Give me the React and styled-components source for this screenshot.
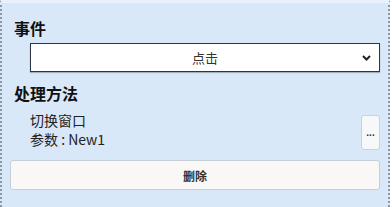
import React from "react";
import styled, { createGlobalStyle } from "styled-components";

const GlobalStyle = createGlobalStyle`
  body {
    margin: 0;
    background: #ffffff;
    font-family: "Noto Sans CJK SC", "Noto Sans", sans-serif;
  }
`;

const Panel = styled("div")`
  width: 390px;
  height: 207px;
  box-sizing: border-box;
  background: #d9e8f8;
  border-left: 2px dotted #8a98a8;
  border-right: 2px dotted #8a98a8;
  border-top: 3px solid #e9f2fc;
  padding: 15px 8px 0 8px;
  display: flex;
  flex-direction: column;
`;

const Heading = styled("div")`
  font-size: 16px;
  font-weight: 700;
  line-height: 20px;
  color: #111;
  margin-left: 4px;
  margin-top: ${({ top }) => top || 0}px;
`;

const Select = styled("div")`
  margin: 5px 0 0 20px;
  height: 29px;
  box-sizing: border-box;
  border: 1px solid #2e3440;
  background: #fff;
  box-shadow: 0 1px 1px rgba(0, 0, 0, 0.25);
  display: flex;
  align-items: center;
  position: relative;
  font-size: 13px;
  color: #333;

  span {
    flex: 1;
    text-align: center;
  }

  svg {
    position: absolute;
    right: 8px;
    top: 11px;
  }
`;

const MethodRow = styled("div")`
  display: flex;
  align-items: flex-start;
  justify-content: space-between;
  margin: 8px 0 0 20px;
`;

const MethodInfo = styled("div")`
  font-size: 14px;
  line-height: 19px;
  color: #222;
`;

const MoreButton = styled("button")`
  width: 19px;
  height: 35px;
  margin-top: 4px;
  padding: 0;
  border: 1px solid #c9d2dc;
  border-radius: 3px;
  background: #f7f8f9;
  font-size: 10px;
  font-weight: 700;
  color: #333;
  line-height: 1;
  font-family: "Liberation Sans", sans-serif;
`;

const DeleteButton = styled("button")`
  margin-top: 10px;
  height: 30px;
  border: 1px solid #c6ced8;
  border-radius: 3px;
  background: #f9f8f6;
  font-family: "Noto Sans CJK SC", sans-serif;
  font-size: 12px;
  font-weight: 700;
  color: #333;
`;

export default function App() {
  return (
    <>
      <GlobalStyle />
      <Panel>
        <Heading>事件</Heading>
        <Select>
          <span>点击</span>
          <svg width="9" height="6" viewBox="0 0 9 6">
            <path d="M1 1l3.5 3.5L8 1" fill="none" stroke="#222" strokeWidth="2" />
          </svg>
        </Select>
        <Heading top={11}>处理方法</Heading>
        <MethodRow>
          <MethodInfo>
            <div>切换窗口</div>
            <div>参数 : New1</div>
          </MethodInfo>
          <MoreButton>...</MoreButton>
        </MethodRow>
        <DeleteButton>删除</DeleteButton>
      </Panel>
    </>
  );
}
